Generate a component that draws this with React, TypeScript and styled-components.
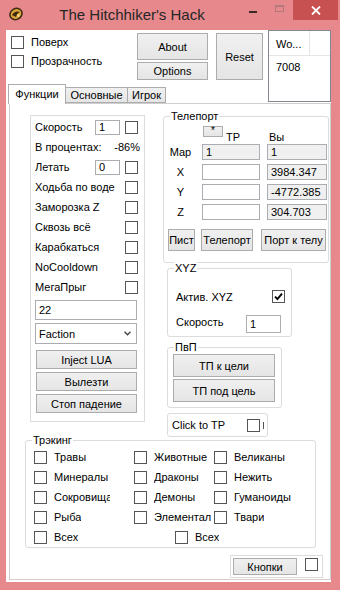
import React from 'react';
import styled, { createGlobalStyle } from 'styled-components';

const GlobalStyle = createGlobalStyle`
	html, body {
		margin: 0;
		padding: 0;
		background: #e7898c;
	}
	body {
		font-family: "Liberation Sans", Arial, sans-serif;
		font-size: 11px;
		color: #000;
	}
`;

const Frame = styled.div`
	width: 340px;
	height: 590px;
	background: #e7898c;
	display: flex;
	flex-direction: column;
	overflow: hidden;
`;

const TitleBar = styled.div`
	height: 30px;
	flex-shrink: 0;
	display: flex;
	align-items: flex-start;
`;

const AppIcon = styled.svg`
	margin: 6px 0 0 8px;
	flex-shrink: 0;
`;

const Title = styled.div`
	flex: 1;
	text-align: center;
	font-size: 15px;
	line-height: 30px;
	color: #262626;
`;

const CaptionButton = styled.div<{ $w: number; $close?: boolean }>`
	width: ${(p) => p.$w}px;
	height: 20px;
	display: flex;
	justify-content: center;
	align-items: ${(p) => (p.$close ? 'center' : 'flex-start')};
	background: ${(p) => (p.$close ? '#c75050' : 'transparent')};
	margin-right: ${(p) => (p.$close ? 2 : 0)}px;
`;

const MinGlyph = styled.span`
	width: 8px;
	height: 2px;
	margin-top: 11px;
	background: #3a2a2a;
`;

const MaxGlyph = styled.span`
	width: 9px;
	height: 7px;
	margin-top: 5px;
	box-sizing: border-box;
	border: 1px solid #b2787a;
	border-top-width: 2px;
`;

const Client = styled.div`
	flex: 1;
	margin: 0 9px 8px 6px;
	background: #fff;
	display: flex;
	flex-direction: column;
	overflow: hidden;
`;

const TopArea = styled.div`
	height: 73px;
	flex-shrink: 0;
	display: flex;
`;

const TopLeft = styled.div`
	width: 265px;
	display: flex;
	flex-direction: column;
`;

const ControlsRow = styled.div`
	height: 54px;
	display: flex;
	align-items: flex-start;
`;

const OptionChecks = styled.div`
	width: 126px;
	margin-left: 5px;
	padding-top: 6px;
	display: flex;
	flex-direction: column;
`;

const CheckRow = styled.div`
	height: 19px;
	display: flex;
	align-items: flex-start;
	gap: 7px;
	line-height: 13px;
`;

const ButtonStack = styled.div`
	width: 71px;
	margin-top: 3px;
	display: flex;
	flex-direction: column;
	gap: 2px;
`;

const Button = styled.div<{ $w?: number; $h: number }>`
	width: ${(p) => (p.$w ? `${p.$w}px` : '100%')};
	height: ${(p) => p.$h}px;
	box-sizing: border-box;
	flex-shrink: 0;
	border: 1px solid #acacac;
	background: linear-gradient(#f0f0f0, #e5e5e5);
	display: flex;
	align-items: center;
	justify-content: center;
	font-size: 11px;
	color: #000;
`;

const ResetButton = styled(Button)`
	margin: 3px 0 0 8px;
`;

const ListView = styled.div`
	width: 63px;
	height: 72px;
	flex-shrink: 0;
	box-sizing: border-box;
	border: 1px solid #828790;
	background: #fff;
	display: flex;
	flex-direction: column;
`;

const ListHeader = styled.div`
	height: 24px;
	display: flex;
	border-bottom: 1px solid #e5e5e5;
`;

const ListHeaderCell = styled.div`
	width: 41px;
	box-sizing: border-box;
	padding-left: 7px;
	line-height: 26px;
	border-right: 1px solid #e5e5e5;
`;

const ListItem = styled.div`
	padding: 4px 0 0 7px;
	line-height: 14px;
`;

const TabStrip = styled.div`
	height: 19px;
	display: flex;
	align-items: flex-end;
	padding-left: 2px;
`;

const Tab = styled.div<{ $active?: boolean; $w: number }>`
	width: ${(p) => p.$w}px;
	height: ${(p) => (p.$active ? 20 : 16)}px;
	margin-bottom: ${(p) => (p.$active ? -1 : 0)}px;
	margin-left: ${(p) => (p.$active ? 0 : -1)}px;
	box-sizing: border-box;
	border: 1px solid #acacac;
	border-bottom: ${(p) => (p.$active ? 'none' : '1px solid #acacac')};
	background: ${(p) => (p.$active ? '#fff' : 'linear-gradient(#f0f0f0, #e5e5e5)')};
	position: relative;
	z-index: ${(p) => (p.$active ? 2 : 1)};
	display: flex;
	justify-content: center;
	align-items: center;
	padding-bottom: ${(p) => (p.$active ? 2 : 0)}px;
`;

const TabPage = styled.div`
	flex: 1;
	margin: 0 0 2px 3px;
	border: 1px solid #cfcfcf;
	display: flex;
	flex-direction: column;
`;

const MainRow = styled.div`
	margin-top: 11px;
	display: flex;
	align-items: flex-start;
`;

const FuncPanel = styled.div`
	width: 115px;
	height: 307px;
	margin-left: 20px;
	box-sizing: border-box;
	border: 1px solid #dcdcdc;
	padding: 1px 6px 0 4px;
	display: flex;
	flex-direction: column;
`;

const FuncRow = styled.div`
	height: 20px;
	display: flex;
	align-items: center;
`;

const FuncLabel = styled.span`
	flex: 1;
	white-space: nowrap;
`;

const Percent = styled.span`
	margin-right: -2px;
`;

const TextBox = styled.div<{ $w?: number; $h: number; $readOnly?: boolean }>`
	width: ${(p) => (p.$w ? `${p.$w}px` : '100%')};
	height: ${(p) => p.$h}px;
	box-sizing: border-box;
	flex-shrink: 0;
	border: 1px solid #abadb3;
	background: ${(p) => (p.$readOnly ? '#f0f0f0' : '#fff')};
	padding-left: 3px;
	display: flex;
	align-items: center;
	white-space: nowrap;
	overflow: hidden;
`;

const Box = styled.span`
	width: 13px;
	height: 13px;
	box-sizing: border-box;
	flex-shrink: 0;
	border: 1px solid #555;
	background: #fff;
	display: inline-flex;
	align-items: center;
	justify-content: center;
`;

const PanelField = styled.div<{ $mt: number }>`
	margin-top: ${(p) => p.$mt}px;
	width: 102px;
`;

const Select = styled(TextBox)`
	justify-content: space-between;
	padding-right: 5px;
`;

const PanelButtons = styled.div`
	margin: 6px 0 0 1px;
	width: 101px;
	display: flex;
	flex-direction: column;
	gap: 3px;
`;

const RightCol = styled.div`
	margin-left: 18px;
	width: 167px;
	display: flex;
	flex-direction: column;
	align-items: flex-start;
`;

const Group = styled.div<{ $w: number; $h: number; $mt: number; $ml?: number }>`
	position: relative;
	width: ${(p) => p.$w}px;
	height: ${(p) => p.$h}px;
	margin-top: ${(p) => p.$mt}px;
	margin-left: ${(p) => p.$ml || 0}px;
	box-sizing: border-box;
	flex-shrink: 0;
	border: 1px solid #dcdcdc;
	border-radius: 3px;
	display: flex;
	flex-direction: column;
`;

const Caption = styled.span`
	position: absolute;
	top: -7px;
	left: 6px;
	padding: 0 1px;
	background: #fff;
	line-height: 13px;
`;

const TpHead = styled.div`
	margin: 9px 0 0 4px;
	height: 18px;
	display: grid;
	grid-template-columns: 27px 58px 60px;
	column-gap: 7px;
`;

const TpHeadCell = styled.div`
	display: flex;
	align-items: flex-start;
	gap: 3px;
	line-height: 13px;
`;

const StarButton = styled(Button)`
	margin-left: 1px;
	font-size: 10px;
	line-height: 8px;
	align-items: flex-start;
`;

const TpHeadText = styled.span<{ $pl?: number }>`
	padding: 5px 0 0 ${(p) => p.$pl || 0}px;
`;

const TpGrid = styled.div`
	margin-left: 4px;
	display: grid;
	grid-template-columns: 27px 58px 60px;
	grid-auto-rows: 16px;
	column-gap: 7px;
	row-gap: 4px;
`;

const TpLabel = styled.div`
	text-align: center;
	line-height: 16px;
	padding-right: 2px;
`;

const TpButtons = styled.div`
	margin: 9px 0 0 4px;
	display: flex;
	gap: 6px;
`;

const XyzRow = styled.div<{ $mt: number }>`
	margin-top: ${(p) => p.$mt}px;
	padding: 0 6px 0 8px;
	display: flex;
	align-items: flex-start;
	justify-content: space-between;
	line-height: 13px;
`;

const XyzLabel = styled.span`
	padding-top: 1px;
`;

const PvpButtons = styled.div`
	margin: 6px 0 0 5px;
	width: 102px;
	display: flex;
	flex-direction: column;
	gap: 2px;
`;

const ClickRow = styled.div`
	margin: 4px 0 0 4px;
	display: flex;
	align-items: center;
	height: 14px;
`;

const ClickLabel = styled.span`
	width: 75px;
`;

const Stub = styled.span`
	margin-left: 3px;
	width: 1px;
	height: 7px;
	background: #555;
`;

const Tracking = styled(Group)`
	padding: 6px 0 0 8px;
`;

const TrackGrid = styled.div`
	display: grid;
	grid-template-columns: 100px 80px auto;
	grid-auto-rows: 20px;
`;

const TrackItem = styled.div<{ $w?: number }>`
	display: flex;
	align-items: center;
	gap: 7px;
	width: ${(p) => (p.$w ? `${p.$w}px` : 'auto')};
`;

const TrackLabel = styled.span<{ $clip?: boolean }>`
	white-space: nowrap;
	overflow: hidden;
	max-width: ${(p) => (p.$clip ? '56px' : 'none')};
`;

const TrackLast = styled.div`
	display: flex;
	height: 20px;
`;

const BottomRow = styled.div`
	margin-top: 7px;
	display: flex;
	justify-content: flex-end;
	padding-right: 7px;
`;

const BottomBox = styled.div`
	width: 93px;
	height: 23px;
	box-sizing: border-box;
	border: 1px solid #dcdcdc;
	padding: 2px 0 0 2px;
	display: flex;
	align-items: flex-start;
	gap: 8px;
`;

const CheckBox: React.FC<{ checked?: boolean }> = ({ checked }) => (
	<Box>
		{checked && (
			<svg width="9" height="9" viewBox="0 0 9 9">
				<path d="M1 4.6 L3.4 7 L8 1.6" stroke="#000" strokeWidth="1.9" fill="none" />
			</svg>
		)}
	</Box>
);

const funcRows = ['Ходьба по воде', 'Заморозка Z', 'Сквозь всё', 'Карабкаться', 'NoCooldown', 'МегаПрыг'];

const tpRows = [
	{ label: 'Map', left: '1', right: '1', leftRO: true },
	{ label: 'X', left: '', right: '3984.347' },
	{ label: 'Y', left: '', right: '-4772.385' },
	{ label: 'Z', left: '', right: '304.703' },
];

// the first column's long label is clipped by its cell in the original form
const trackRows = [
	['Травы', 'Животные', 'Великаны'],
	['Минералы', 'Драконы', 'Нежить'],
	['Сокровища', 'Демоны', 'Гуманоиды'],
	['Рыба', 'Элементал', 'Твари'],
];

export default function App() {
	return (
		<Frame>
			<GlobalStyle />
			<TitleBar>
				<AppIcon width="16" height="16" viewBox="0 0 16 16">
					<ellipse cx="8" cy="8" rx="7" ry="6.2" fill="#3b2a0e" transform="rotate(-30 8 8)" />
					<ellipse cx="8" cy="8" rx="5.6" ry="4.6" fill="#d9a53a" transform="rotate(-30 8 8)" />
					<path d="M4 9 Q7 4 12 6 Q9 7 8 11 Z" fill="#3b2a0e" />
					<circle cx="10.5" cy="9.5" r="1.4" fill="#f3d27a" />
				</AppIcon>
				<Title>The Hitchhiker's Hack</Title>
				<CaptionButton $w={26}>
					<MinGlyph />
				</CaptionButton>
				<CaptionButton $w={27}>
					<MaxGlyph />
				</CaptionButton>
				<CaptionButton $w={45} $close>
					<svg width="10" height="9" viewBox="0 0 10 9">
						<path d="M1 0.5 L9 8.5 M9 0.5 L1 8.5" stroke="#fff" strokeWidth="1.8" />
					</svg>
				</CaptionButton>
			</TitleBar>
			<Client>
				<TopArea>
					<TopLeft>
						<ControlsRow>
							<OptionChecks>
								<CheckRow>
									<CheckBox />
									<span>Поверх</span>
								</CheckRow>
								<CheckRow>
									<CheckBox />
									<span>Прозрачность</span>
								</CheckRow>
							</OptionChecks>
							<ButtonStack>
								<Button $h={27}>About</Button>
								<Button $h={18}>Options</Button>
							</ButtonStack>
							<ResetButton $w={47} $h={47}>
								Reset
							</ResetButton>
						</ControlsRow>
						<TabStrip>
							<Tab $active $w={58}>
								Функции
							</Tab>
							<Tab $w={63}>Основные</Tab>
							<Tab $w={39}>Игрок</Tab>
						</TabStrip>
					</TopLeft>
					<ListView>
						<ListHeader>
							<ListHeaderCell>Wo...</ListHeaderCell>
						</ListHeader>
						<ListItem>7008</ListItem>
					</ListView>
				</TopArea>
				<TabPage>
					<MainRow>
						<FuncPanel>
							<FuncRow>
								<FuncLabel>Скорость</FuncLabel>
								<TextBox $w={25} $h={15}>
									1
								</TextBox>
								<span style={{ width: 5 }} />
								<CheckBox />
							</FuncRow>
							<FuncRow>
								<FuncLabel>В процентах:</FuncLabel>
								<Percent>-86%</Percent>
							</FuncRow>
							<FuncRow>
								<FuncLabel>Летать</FuncLabel>
								<TextBox $w={25} $h={15}>
									0
								</TextBox>
								<span style={{ width: 5 }} />
								<CheckBox />
							</FuncRow>
							{funcRows.map((label) => (
								<FuncRow key={label}>
									<FuncLabel>{label}</FuncLabel>
									<CheckBox />
								</FuncRow>
							))}
							<PanelField $mt={3}>
								<TextBox $h={20}>22</TextBox>
							</PanelField>
							<PanelField $mt={3}>
								<Select $h={21}>
									<span>Faction</span>
									<svg width="7" height="5" viewBox="0 0 7 5">
										<path d="M0.5 0.8 L3.5 3.8 L6.5 0.8" stroke="#444" strokeWidth="1.3" fill="none" />
									</svg>
								</Select>
							</PanelField>
							<PanelButtons>
								<Button $h={19}>Inject LUA</Button>
								<Button $h={19}>Вылезти</Button>
								<Button $h={19}>Стоп падение</Button>
							</PanelButtons>
						</FuncPanel>
						<RightCol>
							<Group $w={166} $h={147} $mt={1}>
								<Caption>Телепорт</Caption>
								<TpHead>
									<span />
									<TpHeadCell>
										<StarButton $w={20} $h={11}>
											*
										</StarButton>
										<TpHeadText>TP</TpHeadText>
									</TpHeadCell>
									<TpHeadCell>
										<TpHeadText $pl={2}>Вы</TpHeadText>
									</TpHeadCell>
								</TpHead>
								<TpGrid>
									{tpRows.map((row) => (
										<React.Fragment key={row.label}>
											<TpLabel>{row.label}</TpLabel>
											<TextBox $h={16} $readOnly={row.leftRO}>
												{row.left}
											</TextBox>
											<TextBox $h={16} $readOnly>
												{row.right}
											</TextBox>
										</React.Fragment>
									))}
								</TpGrid>
								<TpButtons>
									<Button $w={27} $h={22}>
										Пист
									</Button>
									<Button $w={52} $h={22}>
										Телепорт
									</Button>
									<Button $w={65} $h={22} style={{ marginLeft: 2 }}>
										Порт к телу
									</Button>
								</TpButtons>
							</Group>
							<Group $w={125} $h={69} $mt={5} $ml={4}>
								<Caption>XYZ</Caption>
								<XyzRow $mt={21}>
									<XyzLabel>Актив. XYZ</XyzLabel>
									<CheckBox checked />
								</XyzRow>
								<XyzRow $mt={11} style={{ paddingRight: 10 }}>
									<XyzLabel>Скорость</XyzLabel>
									<TextBox $w={35} $h={18}>
										1
									</TextBox>
								</XyzRow>
							</Group>
							<Group $w={115} $h={61} $mt={10} $ml={4}>
								<Caption>ПвП</Caption>
								<PvpButtons>
									<Button $h={23}>ТП к цели</Button>
									<Button $h={23}>ТП под цель</Button>
								</PvpButtons>
							</Group>
							<Group $w={101} $h={24} $mt={5} $ml={4}>
								<ClickRow>
									<ClickLabel>Click to TP</ClickLabel>
									<CheckBox />
									<Stub />
								</ClickRow>
							</Group>
						</RightCol>
					</MainRow>
					<Tracking $w={291} $h={108} $mt={3} $ml={15}>
						<Caption>Трэкинг</Caption>
						<TrackGrid>
							{trackRows.map((row) =>
								row.map((label, i) => (
									<TrackItem key={label}>
										<CheckBox />
										<TrackLabel $clip={i === 0}>{label}</TrackLabel>
									</TrackItem>
								)),
							)}
						</TrackGrid>
						<TrackLast>
							<TrackItem $w={141}>
								<CheckBox />
								<TrackLabel>Всех</TrackLabel>
							</TrackItem>
							<TrackItem>
								<CheckBox />
								<TrackLabel>Всех</TrackLabel>
							</TrackItem>
						</TrackLast>
					</Tracking>
					<BottomRow>
						<BottomBox>
							<Button $w={64} $h={17}>
								Кнопки
							</Button>
							<CheckBox />
						</BottomBox>
					</BottomRow>
				</TabPage>
			</Client>
		</Frame>
	);
}
